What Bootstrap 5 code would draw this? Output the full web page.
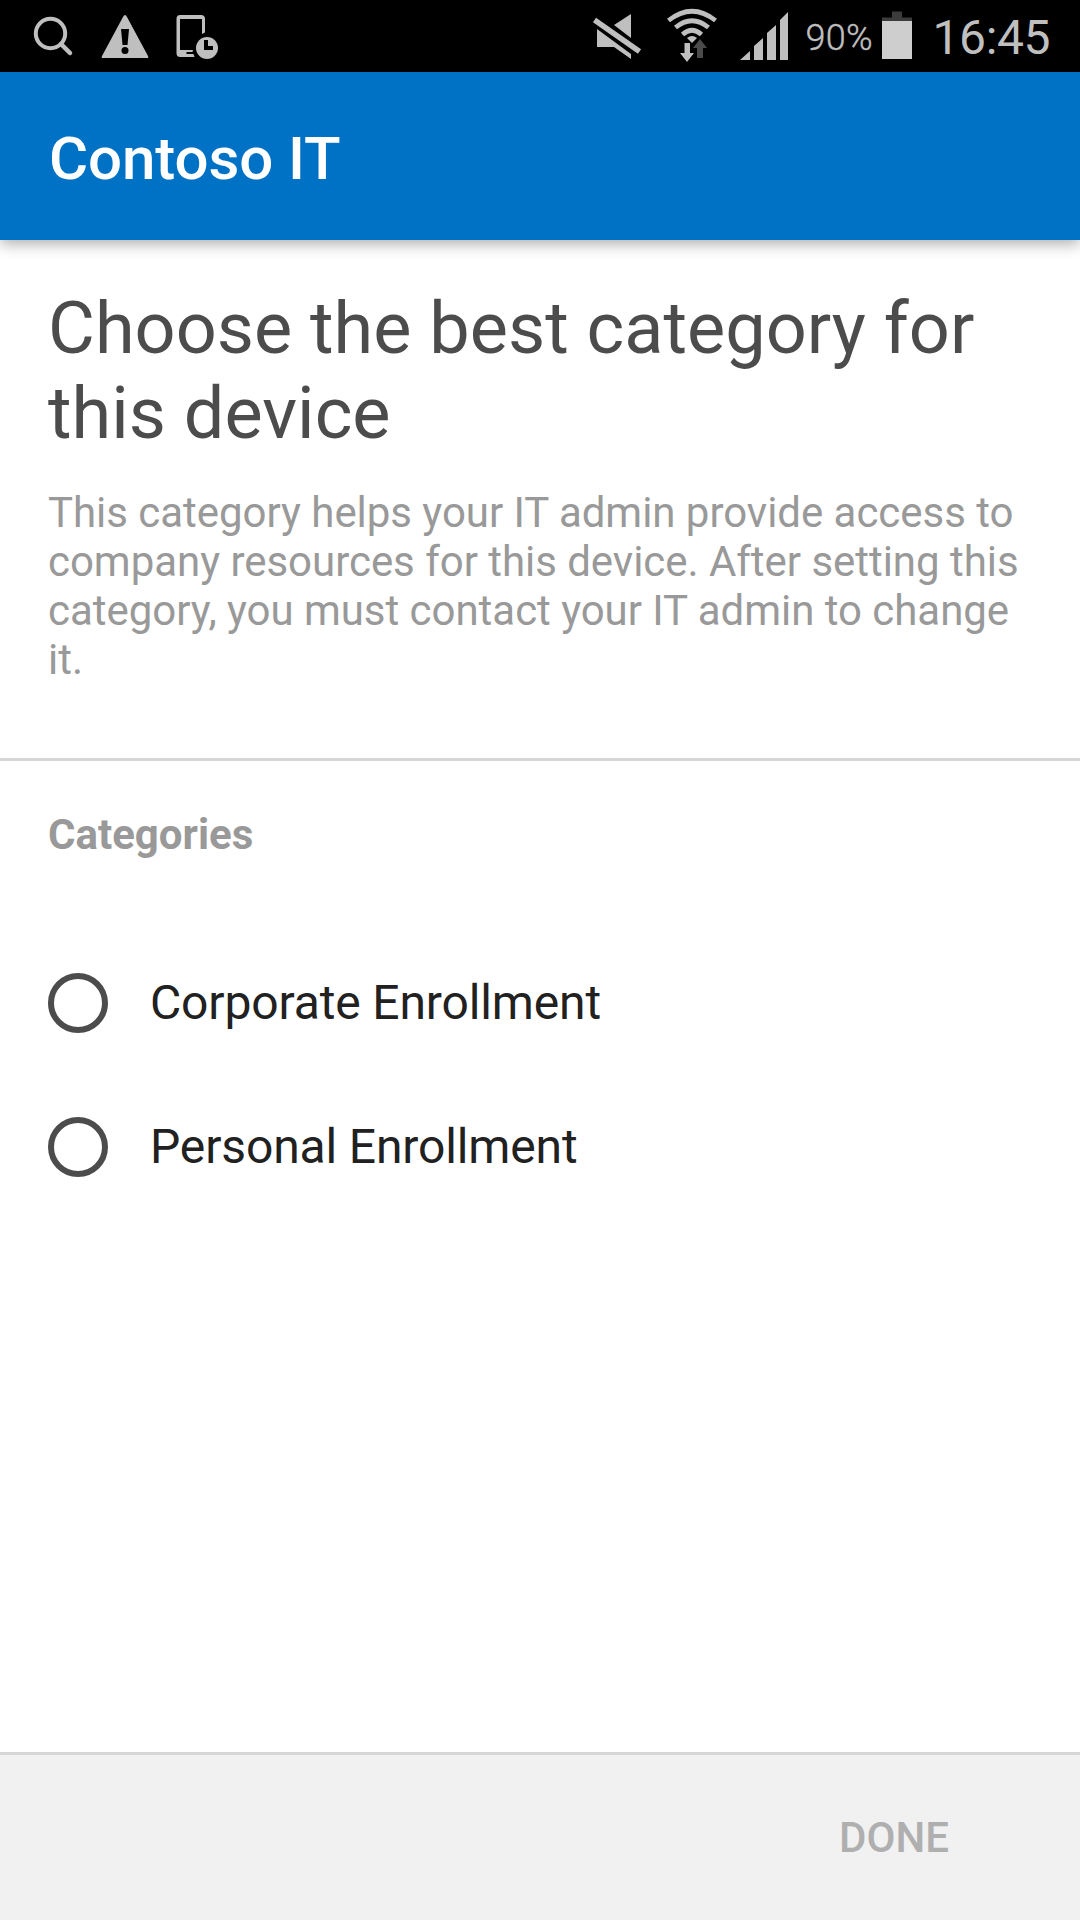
<!DOCTYPE html>
<html lang="en">
<head>
<meta charset="utf-8">
<meta name="viewport" content="width=device-width, initial-scale=1">
<title>Contoso IT</title>
<link href="https://cdn.jsdelivr.net/npm/bootstrap@5.3.0/dist/css/bootstrap.min.css" rel="stylesheet">
<style>
body { font-family: Roboto, "Liberation Sans", sans-serif; background: #fff; }
.screen { width: 1080px; height: 1920px; }
.status-bar { height: 72px; background: #000; }
.status-bar svg { display: block; }
.app-bar { height: 168px; padding: 5px 49px 0; background: #0072c6; box-shadow: 0 4px 14px rgba(0,0,0,.32); z-index: 1; }
.app-title { font-size: 60px; font-weight: 500; line-height: 70px; letter-spacing: -.1px; color: #fff; }
.intro { padding: 46px 48px 74px; border-bottom: 3px solid #d6d6d6; }
.intro-title { font-size: 72px; font-weight: 400; line-height: 85px; letter-spacing: .02px; color: #4c4c4c; margin-bottom: 32px; }
.intro-text { font-size: 42px; line-height: 49px; letter-spacing: -.035px; color: #999; }
.choices { padding: 49px 48px 0; }
.choices-title { font-size: 42px; font-weight: 700; line-height: 49px; color: #999; margin-bottom: 72px; }
.choice { height: 144px; gap: 42px; font-size: 48px; line-height: 56px; letter-spacing: -.14px; color: #212121; }
.form-check-input.choice-radio { width: 60px; height: 60px; border: 6px solid #4c4c4c; }
.bottom-bar { height: 168px; border-top: 3px solid #d6d6d6; background: #f1f1f1; padding-right: 131px; }
.done-btn, .done-btn:disabled { font-size: 42px; font-weight: 500; line-height: 49px; color: #afafaf; border: 0; opacity: 1; }
</style>
</head>
<body>
<div class="screen d-flex flex-column overflow-hidden">
  <header class="status-bar flex-shrink-0">
    <svg width="1080" height="72" viewBox="0 0 1080 72" fill="#bfbfbf" font-family="Roboto, sans-serif">
      <!-- search -->
      <g fill="none" stroke="#bfbfbf"><circle cx="50.5" cy="33.5" r="14.7" stroke-width="4"/><path d="M61 44l9 9" stroke-width="4.500" stroke-linecap="round"/></g>
      <!-- warning -->
      <path d="M125 15Q126 15 127 17L148 56Q149 58 147 58H103Q101 58 102 56L123 17Q124 15 125 15Z"/>
      <path d="M121 29h8l-1.500 16h-5z" fill="#000"/><circle cx="125" cy="50.500" r="3.500" fill="#000"/>
      <!-- device with clock -->
      <path d="M180 15h21q4 0 4 4v13.500l-3 1.500V19h-22v31h13l-.5 2h-6v2h7l1 3h-14.500q-3.500 0-3.500-4V19q0-4 3.500-4z"/>
      <circle cx="207" cy="48" r="11"/><path d="M206 40v8h7" fill="none" stroke="#000" stroke-width="4"/>
      <!-- muted speaker -->
      <path d="M631 14v24l-17-13z"/><path d="M597 29l34 25v5L614 47H597z"/>
      <path d="M594.500 20l45 31.500" fill="none" stroke="#000" stroke-width="10"/>
      <path d="M594.500 20l45 31.500" fill="none" stroke="#bfbfbf" stroke-width="5.500"/>
      <!-- wi-fi -->
      <g fill="none" stroke="#bfbfbf" stroke-width="4.700"><path d="M668.500 20.500Q692 2 715.500 20.500"/><path d="M675.500 27.500Q692 14 708.500 27.500"/><path d="M682.500 34.500Q692 26 701.500 34.500"/></g>
      <path d="M687 38q5-4 10 0l-5 5z"/>
      <path d="M684.500 43h5.500v10h4l-7 9-7-9h4.500z"/>
      <path d="M700 39l7 9h-4v10h-6V48h-4z" fill="#4b4b4b"/>
      <!-- signal -->
      <path d="M740 60l10-9v9zM754 60V46l9-8v22zM767 60V33l9-8v35zM780 60V20l8-8v48z"/>
      <!-- battery -->
      <path d="M892 11.500h10v6h10V21h-30v-3.500h10z" fill="#3b3b3b"/><path d="M882 21h30v38h-30z" fill="#cecece"/>
      <text x="805.500" y="50" font-size="36" textLength="67" font-weight="300" stroke="#bfbfbf" stroke-width=".4">90%</text>
      <text x="932.500" y="54" font-size="48" textLength="118" font-weight="400">16:45</text>
    </svg>
  </header>
  <nav class="app-bar d-flex align-items-center position-relative flex-shrink-0">
    <div class="app-title">Contoso IT</div>
  </nav>
  <main class="flex-grow-1">
    <section class="intro">
      <h1 class="intro-title">Choose the best category for this device</h1>
      <p class="intro-text mb-0">This category helps your IT admin provide access to company resources for this device. After setting this category, you must contact your IT admin to change it.</p>
    </section>
    <section class="choices">
      <h2 class="choices-title">Categories</h2>
      <label class="choice d-flex align-items-center">
        <input class="form-check-input choice-radio m-0 flex-shrink-0" type="radio" name="category">
        <span>Corporate Enrollment</span>
      </label>
      <label class="choice d-flex align-items-center">
        <input class="form-check-input choice-radio m-0 flex-shrink-0" type="radio" name="category">
        <span>Personal Enrollment</span>
      </label>
    </section>
  </main>
  <footer class="bottom-bar d-flex align-items-center justify-content-end flex-shrink-0">
    <button class="btn done-btn p-0" type="button" disabled>DONE</button>
  </footer>
</div>
<script src="https://cdn.jsdelivr.net/npm/bootstrap@5.3.0/dist/js/bootstrap.bundle.min.js"></script>
</body>
</html>
